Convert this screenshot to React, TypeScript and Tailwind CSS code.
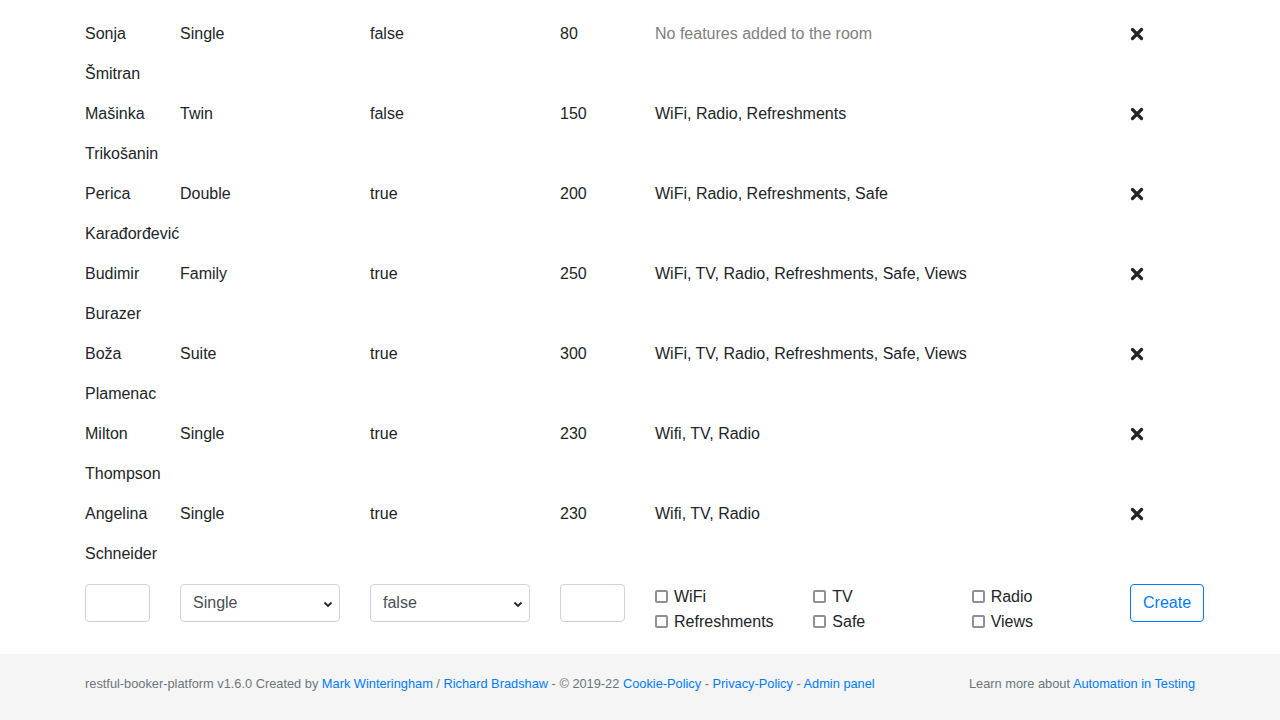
import React from "react";

const rooms = [
  { name: "Sonja Šmitran", type: "Single", acc: "false", price: "80", features: "" },
  { name: "Mašinka Trikošanin", type: "Twin", acc: "false", price: "150", features: "WiFi, Radio, Refreshments" },
  { name: "Perica Karađorđević", type: "Double", acc: "true", price: "200", features: "WiFi, Radio, Refreshments, Safe" },
  { name: "Budimir Burazer", type: "Family", acc: "true", price: "250", features: "WiFi, TV, Radio, Refreshments, Safe, Views" },
  { name: "Boža Plamenac", type: "Suite", acc: "true", price: "300", features: "WiFi, TV, Radio, Refreshments, Safe, Views" },
  { name: "Milton Thompson", type: "Single", acc: "true", price: "230", features: "Wifi, TV, Radio" },
  { name: "Angelina Schneider", type: "Single", acc: "true", price: "230", features: "Wifi, TV, Radio" },
];

function XIcon() {
  return (
    <svg width="14" height="14" viewBox="0 0 14 14" className="mt-[13px]">
      <path d="M2.5 2.5 L11.5 11.5 M11.5 2.5 L2.5 11.5" stroke="#212529" strokeWidth="3.2" strokeLinecap="round" fill="none" />
    </svg>
  );
}

function Chevron() {
  return (
    <svg width="10" height="7" viewBox="0 0 10 7" className="absolute right-[6px] top-[16px] pointer-events-none">
      <path d="M1.5 1.5 L5 5 L8.5 1.5" stroke="#212529" strokeWidth="1.8" fill="none" />
    </svg>
  );
}

function Check({ label }: { label: string }) {
  return (
    <label className="flex items-center h-[25px]">
      <span className="inline-block w-[13px] h-[13px] border-[2px] border-[#8f8f9d] rounded-[2px] bg-white" />
      <span className="ml-[6px]">{label}</span>
    </label>
  );
}

export default function App() {
  return (
    <div className="min-h-[720px] bg-white text-[#212529] text-[16px]" style={{ fontFamily: '"Liberation Sans", Arial, sans-serif' }}>
      <div className="w-[1140px] mx-auto pt-[14px]">
        {rooms.map((r) => (
          <div key={r.name} className="flex leading-[40px]">
            <div className="w-[95px] px-[15px]">{r.name.split(" ").map((p, i) => <div key={i} className="whitespace-nowrap">{p}</div>)}</div>
            <div className="w-[190px] px-[15px]">{r.type}</div>
            <div className="w-[190px] px-[15px]">{r.acc}</div>
            <div className="w-[95px] px-[15px]">{r.price}</div>
            <div className="w-[475px] px-[15px]">
              {r.features ? r.features : <span className="text-[#808080]">No features added to the room</span>}
            </div>
            <div className="w-[95px] px-[15px]">
              <XIcon />
            </div>
          </div>
        ))}
        <div className="flex mt-[10px] pb-[20px]">
          <div className="w-[95px] px-[15px]">
            <input type="text" className="w-full h-[38px] border border-[#ced4da] rounded-[4px] px-[12px] outline-none" />
          </div>
          <div className="w-[190px] px-[15px]">
            <div className="relative h-[38px] border border-[#ced4da] rounded-[4px] text-[#495057] px-[12px] leading-[36px]">
              Single
              <Chevron />
            </div>
          </div>
          <div className="w-[190px] px-[15px]">
            <div className="relative h-[38px] border border-[#ced4da] rounded-[4px] text-[#495057] px-[12px] leading-[36px]">
              false
              <Chevron />
            </div>
          </div>
          <div className="w-[95px] px-[15px]">
            <input type="text" className="w-full h-[38px] border border-[#ced4da] rounded-[4px] px-[12px] outline-none" />
          </div>
          <div className="w-[475px] flex">
            <div className="w-[158.33px] pl-[15px]">
              <Check label="WiFi" />
              <Check label="Refreshments" />
            </div>
            <div className="w-[158.33px] pl-[15px]">
              <Check label="TV" />
              <Check label="Safe" />
            </div>
            <div className="w-[158.33px] pl-[15px]">
              <Check label="Radio" />
              <Check label="Views" />
            </div>
          </div>
          <div className="w-[95px] px-[15px]">
            <button className="h-[38px] px-[12px] border border-[#007bff] text-[#007bff] rounded-[4px] bg-white">Create</button>
          </div>
        </div>
      </div>
      <footer className="bg-[#f5f5f5] h-[80px] pt-[20px]">
        <div className="w-[1140px] mx-auto flex text-[12.8px] text-[#6c757d] leading-[20px]">
          <div className="w-[855px] px-[15px]">
            restful-booker-platform v1.6.0 Created by <a className="text-[#007bff]">Mark Winteringham</a> / <a className="text-[#007bff]">Richard Bradshaw</a> - © 2019-22 <a className="text-[#007bff]">Cookie-Policy</a> - <a className="text-[#007bff]">Privacy-Policy</a> - <a className="text-[#007bff]">Admin panel</a>
          </div>
          <div className="w-[285px] px-[15px] text-right">
            Learn more about <a className="text-[#007bff]">Automation in Testing</a>
          </div>
        </div>
      </footer>
    </div>
  );
}
